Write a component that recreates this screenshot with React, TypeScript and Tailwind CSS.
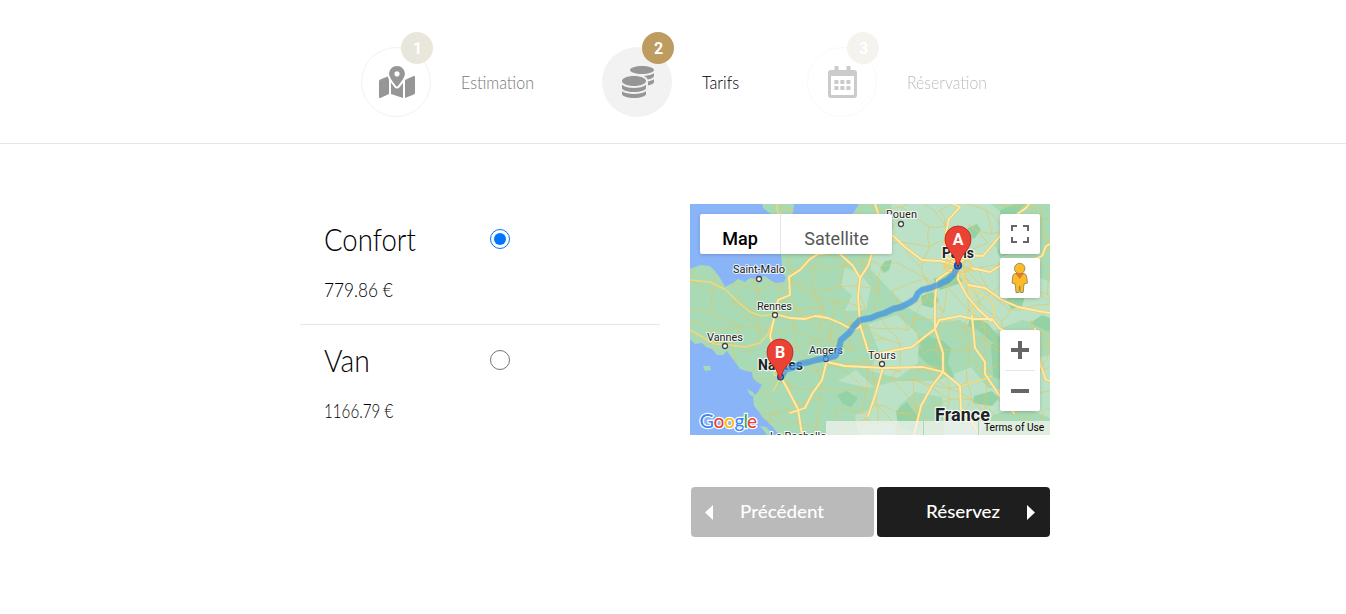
import { useLayoutEffect, useRef, useState } from "react";
import { FaCoins, FaMapMarkedAlt } from "react-icons/fa";

/** Single line of text, condensed or widened to an exact width. */
function FitText({ text, width, className }: { text: string; width: number; className: string }) {
  const ref = useRef<HTMLSpanElement>(null);
  const [scale, setScale] = useState(1);
  useLayoutEffect(() => {
    const natural = ref.current?.offsetWidth ?? width;
    if (natural) setScale(width / natural);
  }, [text, width]);
  return (
    <span className="block shrink-0 text-left" style={{ width }}>
      <span
        ref={ref}
        className={`inline-block origin-left whitespace-nowrap ${className}`}
        style={{ transform: `scaleX(${scale})` }}
      >
        {text}
      </span>
    </span>
  );
}

function CalendarIcon() {
  return (
    <svg width="29" height="32" viewBox="0 0 29 32" fill="#969696">
      <path
        fillRule="evenodd"
        d="M3 4h3.500V.8q0-.8.8-.8h2.400q.8 0 .8.8V4h8V.8q0-.8.8-.8h2.400q.8 0 .8.8V4H26q3 0 3 3v22q0 3-3 3H3q-3 0-3-3V7q0-3 3-3zM3 10v18.200q0 .8.8.8h21.400q.8 0 .8-.8V10z"
      />
      {[14, 20].map((y) =>
        [6.3, 12.3, 18.3].map((x) => <rect key={`${x}-${y}`} x={x} y={y} width="4.2" height="4" rx="0.7" />),
      )}
    </svg>
  );
}

/* Local road network: a jittered lattice, identical on every render. */
function buildLocalRoads() {
  let seed = 11;
  const rnd = () => {
    seed = (seed * 16807) % 2147483647;
    return seed / 2147483647;
  };
  const cols = 19;
  const rows = 13;
  const nodes: number[][][] = [];
  for (let r = 0; r < rows; r++) {
    nodes.push([]);
    for (let c = 0; c < cols; c++) nodes[r].push([c * 21 - 8 + rnd() * 17, r * 20 - 6 + rnd() * 16]);
  }
  let d = "";
  const link = (a: number[], b: number[]) => {
    const mx = (a[0] + b[0]) / 2 + rnd() * 5 - 2.5;
    const my = (a[1] + b[1]) / 2 + rnd() * 5 - 2.5;
    d += `M${a[0].toFixed(1)} ${a[1].toFixed(1)}L${mx.toFixed(1)} ${my.toFixed(1)}L${b[0].toFixed(1)} ${b[1].toFixed(1)}`;
  };
  for (let r = 0; r < rows - 1; r++)
    for (let c = 0; c < cols - 1; c++) {
      if (rnd() < 0.75) link(nodes[r][c], nodes[r][c + 1]);
      if (rnd() < 0.7) link(nodes[r][c], nodes[r + 1][c]);
      if (rnd() < 0.4) link(nodes[r][c], nodes[r + 1][c + 1]);
    }
  return d;
}
const localRoads = buildLocalRoads();

const land =
  "M0 65L10 61L20 62L25 67L30 74L35 83L43 79L48 75L55 78L60 74L68 75L75 72L80 76L86 79L94 78L96 73L91 68L92 62L91 50L88 30L84 12L78 8L73 4L72 0H104L103 9L98 12L105 22L130 24L152 18L164 8L169 0H360V231H90L85 226L79 219L73 214L69 208L64 202L63 193L68 188L72 181L67 178L63 174L62 168L56 167L50 165L45 158L39 150L37 147L33 151L27 151L22 145L16 143L12 139L5 140L0 135Z";

const mainRoads = [
  "M85 110L88 96L100 91L99 73L110 66L120 55L128 50L148 48L163 62L170 74L168 94L170 119",
  "M85 110L100 114L115 115L125 112L138 114L150 119L163 126L170 123",
  "M170 74L178 62L184 43L190 40",
  "M85 111L80 132L86 154L91 173L98 186L108 205L112 231",
  "M137 156L132 176L122 190L115 204L100 209",
  "M137 158L155 162L175 163L193 164L233 163L253 168L270 182L271 205L282 218L290 231",
  "M253 168L253 149L245 125L245 96L247 76L268 61L250 57L232 56L215 43L199 28L190 15L185 0",
  "M170 121L175 137L178 147L187 150L193 163L186 189L178 212",
  "M187 150L206 146L222 143L237 131L245 125L249 116L270 112L283 115L302 115L309 124L321 130",
  "M268 61L278 51L293 52L310 32L318 17L336 4L339 0",
  "M282 112L285 144L295 158L295 170L307 188L324 209",
  "M268 61L268 75L277 92L288 105L301 117",
  "M278 81L295 84L312 96L328 103L348 107L360 109",
  "M281 64L300 68L318 57L335 59L352 52L356 42L360 40",
  "M268 61L255 52L256 29L259 15L270 3L263 0",
  "M253 168L242 182L231 202L224 231",
  "M345 125L350 160L356 176L360 177",
  "M91 173L98 162L91 156",
];

const mediumRoads = [
  "M0 76L20 78L36 86L48 98L60 108L72 112L85 110",
  "M85 111L78 130L70 139L55 143L38 141L25 140L14 134L0 126",
  "M110 114L130 111L150 119",
  "M91 156L84 163L84 171L91 173L83 187",
  "M87 0L88 13L91 9",
  "M283 115L282 90L268 61",
  "M301 117L305 110L302 98L288 88L272 75",
  "M270 182L295 175L302 172",
  "M97 162L108 158L137 153",
];

const woods = [
  "M231 136L238 132L253 137L261 144L258 159L265 174L257 172L249 166L235 158L228 150Z",
  "M278 24L287 20L291 26L284 35L278 31Z",
  "M310 6L325 0H336L320 14L310 13Z",
  "M243 75L260 69L273 75L271 79L250 86Z",
  "M307 47L315 40L326 38L322 48L310 54Z",
  "M280 112L297 119L313 137L302 138L289 127L278 122Z",
  "M301 141L317 128L328 132L322 155L311 176L303 173Z",
  "M206 207L217 198L226 210L231 223L222 227L208 222Z",
  "M190 64L195 57L202 56L199 66L194 69Z",
  "M231 92L242 88L249 96L242 104L232 101Z",
  "M316 96L325 89L335 92L332 103L321 105Z",
  "M340 119L352 111L360 114V128L350 124Z",
  "M284 192L302 187L309 194L302 202L283 199Z",
  "M147 191L157 187L168 194L161 203L153 200Z",
];

const pale = [
  "M201 0H300L318 13L305 42L318 61L360 78V122L332 116L296 130L270 116L246 119L218 104L200 86L181 66L180 37L203 24Z",
  "M155 63L170 70L181 83L176 106L155 107L162 91L151 82Z",
  "M178 120L207 111L228 130L228 159L208 174L180 167L189 147Z",
  "M148 177L166 166L185 184L180 205L165 211L168 231H205L209 202L225 188L252 193L254 231H288L303 211L331 202L360 214V151L337 156L327 187L298 184L281 163L247 177L206 177L178 184Z",
];

const route =
  "M268 61L264 70L258 76L250 80L240 84L232 86L228 89L225 95L219 99L211 103L203 105L195 109L188 111L181 114L170 116L165 121L159 129L151 136L148 148L145 152L137 154L126 156L119 158L109 160L103 164L96 165L91 173";

function Place({ x, y, w, name, dotX, dotY }: { x: number; y: number; w: number; name: string; dotX: number; dotY: number }) {
  return (
    <g>
      <text x={x} y={y} textLength={w} fontSize="11" fill="#222" stroke="#fff" strokeOpacity="0.75" strokeWidth="2.2" strokeLinejoin="round" paintOrder="stroke">
        {name}
      </text>
      <circle cx={dotX} cy={dotY} r="2.5" fill="#fff" stroke="#444" strokeWidth="1.3" />
    </g>
  );
}

function Pin({ x, y, letter }: { x: number; y: number; letter: string }) {
  return (
    <g transform={`translate(${x} ${y})`}>
      <path
        d="M0 0C-1.200 0-1.200-1-1.600-3C-3-12-13-15-13-26.500A13 13 0 0 1 13-26.500C13-15 3-12 1.600-3C1.200-1 1.200 0 0 0Z"
        fill="#ea4335"
        stroke="#b31412"
        strokeWidth="0.7"
      />
      <text x="0" y="-20.500" textAnchor="middle" fontSize="16" fontWeight="700" fill="#fff">
        {letter}
      </text>
    </g>
  );
}

function MapDrawing() {
  return (
    <svg className="block" width="360" height="231" viewBox="0 0 360 231" fontFamily='Roboto, "Liberation Sans", sans-serif'>
      <defs>
        <clipPath id="land">
          <path d={land} />
        </clipPath>
      </defs>
      <rect width="360" height="231" fill="#8ab4f8" />
      <path d={land} fill="#a8dab5" />
      <g fill="#a8dab5">
        <path d="M13 162L20 162L21 166L15 167Z" />
        <path d="M57 185L63 188L66 193L60 191Z" />
        <path d="M70 222L76 223L84 231H77Z" />
      </g>
      <g clipPath="url(#land)">
        {pale.map((d) => (
          <path key={d} d={d} fill="#bbe2c6" />
        ))}
        {woods.map((d) => (
          <path key={d} d={d} fill="#94d2a5" />
        ))}
        <path d={localRoads} fill="none" stroke="#e3c863" strokeWidth="0.65" strokeLinejoin="round" />
        <g fill="none" strokeLinejoin="round" strokeLinecap="round">
          {mediumRoads.map((d) => (
            <path key={d} d={d} stroke="#f6d775" strokeWidth="1.5" />
          ))}
          {mainRoads.map((d) => (
            <path key={d} d={d} stroke="#edc761" strokeWidth="2.9" />
          ))}
          {mainRoads.map((d) => (
            <path key={d} d={d} stroke="#ffebaa" strokeWidth="1.8" />
          ))}
        </g>
        <g fill="none" stroke="#f3cf65" strokeWidth="1.2">
          <ellipse cx="268" cy="62" rx="14" ry="7" />
          <path d="M253 66L260 58L268 62L280 55M255 60L265 67L278 69M260 72L268 62L284 67" />
        </g>
      </g>
      <g stroke="#fff" strokeOpacity="0.75" strokeWidth="2.6" paintOrder="stroke" strokeLinejoin="round" fill="#202124" fontWeight="700">
        <text x="252" y="54" fontSize="14" textLength="32">Paris</text>
        <text x="68" y="166" fontSize="14" textLength="45">Nantes</text>
        <text x="245" y="217" fontSize="18" textLength="55">France</text>
      </g>
      <Place x={196} y={14} w={31} name="Rouen" dotX={211} dotY={20} />
      <Place x={43} y={68.5} w={52} name="Saint-Malo" dotX={69} dotY={75} />
      <Place x={67} y={106} w={35} name="Rennes" dotX={85} dotY={111} />
      <Place x={17} y={137} w={36} name="Vannes" dotX={35} dotY={142} />
      <Place x={119} y={150} w={34} name="Angers" dotX={136} dotY={155} />
      <Place x={178} y={155} w={28} name="Tours" dotX={192} dotY={160} />
      <text x="80" y="236" fontSize="11" textLength="56" fill="#222" stroke="#fff" strokeWidth="2" paintOrder="stroke">
        La Rochelle
      </text>
      <path d={route} fill="none" stroke="#1967d2" strokeOpacity="0.35" strokeWidth="6.5" strokeLinejoin="round" strokeLinecap="round" />
      <path d={route} fill="none" stroke="#4a9fe8" strokeOpacity="0.65" strokeWidth="5" strokeLinejoin="round" strokeLinecap="round" />
      <circle cx="268" cy="61.5" r="3.2" fill="#4a91e2" stroke="#174ea6" strokeWidth="1.8" />
      <circle cx="268" cy="61.5" r="1.3" fill="#112233" />
      <circle cx="90.5" cy="173" r="2.8" fill="#79b5ed" stroke="#174ea6" strokeWidth="1.5" />
      <Pin x={268} y={61.5} letter="A" />
      <Pin x={90} y={174.5} letter="B" />
      <g fontFamily="Lato, sans-serif" fontSize="20" fontWeight="500" stroke="#fff" strokeWidth="2.4" paintOrder="stroke">
        <text x="9.5" y="224" fill="#4285f4" textLength="14.5" lengthAdjust="spacingAndGlyphs">G</text>
        <text x="23.5" y="224" fill="#ea4335" textLength="11" lengthAdjust="spacingAndGlyphs">o</text>
        <text x="34" y="224" fill="#fbbc04" textLength="11" lengthAdjust="spacingAndGlyphs">o</text>
        <text x="44.5" y="224" fill="#4285f4" textLength="10" lengthAdjust="spacingAndGlyphs">g</text>
        <text x="53.5" y="224" fill="#34a853" textLength="4.5" lengthAdjust="spacingAndGlyphs">l</text>
        <text x="57" y="224" fill="#ea4335" textLength="10" lengthAdjust="spacingAndGlyphs">e</text>
      </g>
    </svg>
  );
}

function Pegman() {
  return (
    <svg width="20" height="32" viewBox="0 0 20 32">
      <g fill="#fbbc2c" stroke="#8f7844" strokeWidth="0.8" strokeLinejoin="round">
        <path d="M5 11.500H14Q16 12 16.500 14L17.500 21L14 22L13.200 30.500H10.300L9.700 24L9 30.500H6L5.200 22L2 21L2.800 14Q3.200 12 5 11.500Z" />
        <circle cx="9.7" cy="6.500" r="5.200" />
      </g>
      <path d="M5.500 11.500H14L9.700 17Z" fill="#e37b2c" />
    </svg>
  );
}

function MapPanel() {
  return (
    <div className="relative h-[231px] w-[360px] overflow-hidden font-[Roboto,sans-serif]">
      <MapDrawing />
      <div className="absolute top-[10px] left-[10px] flex h-10 overflow-hidden rounded-[2px] bg-white text-[18px] leading-[49px] shadow-[0_1px_4px_-1px_rgba(0,0,0,0.3)]">
        <button className="w-[81px] border-r border-[#e6e6e6] text-center font-medium text-black">Map</button>
        <button className="w-[111px] text-center text-[#565656]">Satellite</button>
      </div>
      <button className="absolute top-[10px] right-[10px] flex size-10 items-center justify-center rounded-[2px] bg-white shadow-[0_1px_4px_-1px_rgba(0,0,0,0.3)]">
        <svg width="18" height="18" viewBox="0 0 18 18" fill="#666">
          <path d="M0 0H6V2H2V6H0ZM12 0H18V6H16V2H12ZM0 12H2V16H6V18H0ZM16 12H18V18H12V16H16Z" />
        </svg>
      </button>
      <button className="absolute top-[54px] right-[10px] flex size-10 items-center justify-center rounded-[2px] bg-white shadow-[0_1px_4px_-1px_rgba(0,0,0,0.3)]">
        <Pegman />
      </button>
      <div className="absolute top-[126px] right-[10px] flex w-10 flex-col items-center rounded-[2px] bg-white shadow-[0_1px_4px_-1px_rgba(0,0,0,0.3)]">
        <button className="flex h-10 items-center">
          <svg width="18" height="18" viewBox="0 0 18 18" fill="#666">
            <path d="M7 0H11V7H18V11H11V18H7V11H0V7H7Z" />
          </svg>
        </button>
        <div className="h-px w-[30px] bg-[#e6e6e6]" />
        <button className="flex h-10 items-center">
          <svg width="18" height="18" viewBox="0 0 18 18" fill="#666">
            <path d="M0 7H18V11H0Z" />
          </svg>
        </button>
      </div>
      <div className="absolute right-0 bottom-0 flex h-[14px] w-[224px] justify-end bg-[#f5f5f5]/70 pr-1.5 text-[10px] leading-[14px] text-black">
        <span className="mr-[54px] w-px bg-[#a8dab5]" />
        <span className="mr-[5px] w-px bg-[#a8dab5]" />
        <FitText text="Terms of Use" width={60} className="" />
      </div>
    </div>
  );
}

const steps = [
  { n: 1, label: "Estimation", width: 73, look: "opacity-100", circle: "border border-[#f2f2f2]", badge: "-right-[3px] -top-[16px] bg-[#e9e7dc]", text: "text-[#777]", gap: "mr-[68px]" },
  { n: 2, label: "Tarifs", width: 37, look: "opacity-100", circle: "bg-[#f2f2f2]", badge: "-right-[2px] -top-[15px] bg-[#be9b5e]", text: "text-black", gap: "mr-[68px]" },
  { n: 3, label: "Réservation", width: 80, look: "opacity-50", circle: "border border-[#f2f2f2]", badge: "-right-[3px] -top-[16px] bg-[#e9e7dc]", text: "text-[#777]", gap: "" },
];

function Stepper() {
  return (
    <header className="flex h-[144px] border-b border-[#e6e6e6] pt-[47px] pl-[361px]">
      {steps.map((s) => (
        <div key={s.n} className={`flex h-[70px] items-center ${s.look} ${s.gap}`}>
          <div className={`relative mr-[30px] flex size-[70px] items-center justify-center rounded-full text-[#969696] ${s.circle}`}>
            {s.n === 1 && <FaMapMarkedAlt className="ml-px h-8 w-9" />}
            {s.n === 2 && <FaCoins className="ml-px size-8" />}
            {s.n === 3 && <CalendarIcon />}
            <span
              className={`absolute flex size-8 items-center justify-center rounded-full pt-px pl-px font-[Roboto,sans-serif] text-[16px] font-bold text-white ${s.badge}`}
            >
              {s.n}
            </span>
          </div>
          <FitText text={s.label} width={s.width} className={`font-[Lato,sans-serif] text-[18px] leading-6 font-light ${s.text}`} />
        </div>
      ))}
    </header>
  );
}

function Fare({ name, nameWidth, price, priceWidth, checked }: { name: string; nameWidth: number; price: string; priceWidth: number; checked?: boolean }) {
  return (
    <label className="block h-[121px] pt-[15px] pl-6 font-[Lato,sans-serif] text-black">
      <div className="flex h-10 items-center">
        <div className="w-[166px] pb-px">
          <FitText text={name} width={nameWidth} className="text-[32px] leading-10 font-light" />
        </div>
        <input type="radio" name="fare" defaultChecked={checked} className="m-0 size-5" />
      </div>
      <div className="mt-[16px]">
        <FitText text={price} width={priceWidth} className="text-[20px] leading-[28px] font-light" />
      </div>
    </label>
  );
}

export default function App() {
  return (
    <div className="h-[614px] overflow-hidden bg-white">
      <Stepper />
      <main className="flex gap-[30px] pt-[60px] pl-[300px]">
        <section className="w-[360px]">
          <div className="h-[121px] border-b border-[#e9e7dc]">
            <Fare name="Confort" nameWidth={92} price="779.86 €" priceWidth={69} checked />
          </div>
          <Fare name="Van" nameWidth={46} price="1166.79 €" priceWidth={69} />
        </section>
        <section className="w-[360px]">
          <MapPanel />
          <div className="mt-[52px] flex gap-[3px] pl-px font-[Lato,sans-serif] text-[17px] font-medium text-white">
            <button className="flex h-[50px] w-[183px] items-center rounded-[4px] bg-[#bababa] pl-[14px]">
              <svg className="mr-[27px]" width="8" height="15" viewBox="0 0 8 15" fill="currentColor">
                <path d="M8 0V15L0 7.500Z" />
              </svg>
              <FitText text="Précédent" width={84} className="" />
            </button>
            <button className="flex h-[50px] w-[173px] items-center rounded-[4px] bg-[#1e1e1e] pl-[49px]">
              <FitText text="Réservez" width={74} className="" />
              <svg className="ml-[27px]" width="8" height="15" viewBox="0 0 8 15" fill="currentColor">
                <path d="M0 0V15L8 7.500Z" />
              </svg>
            </button>
          </div>
        </section>
      </main>
    </div>
  );
}
